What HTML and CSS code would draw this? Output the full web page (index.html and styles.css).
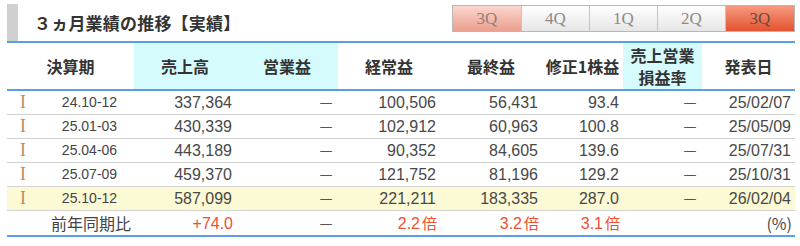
FILE: index.html
```html
<!DOCTYPE html>
<html lang="ja">
<head>
<meta charset="utf-8">
<link rel="stylesheet" href="styles.css">
</head>
<body>
<div class="wrap">
  <div class="titlebar">
    <div class="bar"></div>
    <h2 class="title">３ヵ月業績の推移【実績】</h2>
    <div class="tabs">
      <span class="tab tab-prev">3Q</span>
      <span class="tab">4Q</span>
      <span class="tab">1Q</span>
      <span class="tab">2Q</span>
      <span class="tab tab-cur">3Q</span>
    </div>
  </div>
  <table class="perf">
    <colgroup>
      <col class="c-i"><col class="c-per"><col class="c-num"><col class="c-num"><col class="c-num"><col class="c-num"><col class="c-eps"><col class="c-rate"><col class="c-date">
    </colgroup>
    <thead>
      <tr>
        <th colspan="2">決算期</th>
        <th class="hl">売上高</th>
        <th class="hl">営業益</th>
        <th>経常益</th>
        <th>最終益</th>
        <th>修正1株益</th>
        <th class="hl">売上営業<br>損益率</th>
        <th>発表日</th>
      </tr>
    </thead>
    <tbody>
      <tr>
        <td class="ic">I</td><td class="per">24.10-12</td>
        <td>337,364</td><td class="dash">－</td><td>100,506</td><td>56,431</td><td>93.4</td><td class="dash">－</td><td>25/02/07</td>
      </tr>
      <tr>
        <td class="ic">I</td><td class="per">25.01-03</td>
        <td>430,339</td><td class="dash">－</td><td>102,912</td><td>60,963</td><td>100.8</td><td class="dash">－</td><td>25/05/09</td>
      </tr>
      <tr>
        <td class="ic">I</td><td class="per">25.04-06</td>
        <td>443,189</td><td class="dash">－</td><td>90,352</td><td>84,605</td><td>139.6</td><td class="dash">－</td><td>25/07/31</td>
      </tr>
      <tr>
        <td class="ic">I</td><td class="per">25.07-09</td>
        <td>459,370</td><td class="dash">－</td><td>121,752</td><td>81,196</td><td>129.2</td><td class="dash">－</td><td>25/10/31</td>
      </tr>
      <tr class="latest">
        <td class="ic">I</td><td class="per">25.10-12</td>
        <td>587,099</td><td class="dash">－</td><td>221,211</td><td>183,335</td><td>287.0</td><td class="dash">－</td><td>26/02/04</td>
      </tr>
      <tr class="yoy">
        <td colspan="2" class="yoy-label">前年同期比</td>
        <td class="red">+74.0</td><td class="dash">－</td><td class="red">2.2<span class="bai">倍</span></td><td class="red">3.2<span class="bai">倍</span></td><td class="red">3.1<span class="bai">倍</span></td><td></td><td class="unit">(%)</td>
      </tr>
    </tbody>
  </table>
</div>
</body>
</html>
```

FILE: styles.css
```css
html, body {
  margin: 0;
  padding: 0;
  background: #fff;
}
body {
  font-family: "Liberation Sans", "Noto Sans CJK JP", sans-serif;
  color: #444;
}
.wrap {
  padding: 4px 5px 0 7px;
}
.titlebar {
  display: flex;
  align-items: flex-start;
  height: 37px;
  border-bottom: 2px solid #5a9de8;
}
.bar {
  width: 11px;
  height: 37px;
  background: #d0d0d0;
}
.title {
  margin: 0 0 0 16px;
  font-family: "Noto Sans CJK JP", sans-serif;
  font-size: 17px;
  font-weight: bold;
  color: #333;
  line-height: 37px;
  letter-spacing: 0.2px;
}
.tabs {
  margin-left: auto;
  margin-top: 1px;
  display: flex;
  border: 1px solid #b8b8b8;
}
.tab {
  width: 68px;
  height: 25px;
  box-sizing: border-box;
  border-left: 1px solid #c4c4c4;
  background: linear-gradient(#ffffff, #e6e6e6);
  font-family: "Liberation Serif", serif;
  font-size: 17px;
  line-height: 25px;
  text-align: center;
  color: #8a8a8a;
}
.tab:first-child {
  border-left: none;
}
.tab-prev {
  background: linear-gradient(#fbd6cc, #eba08f);
  color: #9a7a74;
}
.tab-cur {
  width: 69px;
  background: linear-gradient(#f69a80, #e4532f);
  color: #6a4a40;
}
.perf {
  width: 788px;
  border-collapse: collapse;
  table-layout: fixed;
}
.c-i { width: 38px; }
.c-per { width: 89px; }
.c-num { width: 102px; }
.c-eps { width: 81px; }
.c-rate { width: 79px; }
.c-date { width: 93px; }
.perf th {
  height: 46px;
  padding: 0;
  font-family: "Noto Sans CJK JP", sans-serif;
  font-size: 16px;
  font-weight: bold;
  color: #333;
  line-height: 22px;
  text-align: center;
  vertical-align: middle;
  border-bottom: 2px solid #5a9de8;
}
.perf th.hl {
  background: #d5fbfd;
}
.perf td {
  height: 23px;
  padding: 0 4px 0 0;
  font-size: 16px;
  line-height: 23px;
  text-align: right;
  color: #484848;
  border-bottom: 1px solid #d2d2d2;
  white-space: nowrap;
}
.perf td.ic {
  text-align: left;
  padding-left: 13px;
  font-family: "Liberation Serif", serif;
  font-size: 18px;
  color: #c0875e;
}
.perf td.per {
  text-align: center;
  padding: 0 0 0 0;
  font-size: 14px;
  color: #444;
}
.perf td.dash {
  font-family: "Noto Sans CJK JP", sans-serif;
  color: #555;
  padding-right: 4px;
}
.latest td {
  background: #fcfad4;
}
.yoy td {
  border-bottom: 2px solid #5a9de8;
  height: 23px;
}
.perf td.yoy-label {
  font-family: "Noto Sans CJK JP", sans-serif;
  padding-right: 3px;
  color: #444;
}
.perf td.red {
  color: #f04e2e;
  padding-right: 3px;
}
.bai {
  font-family: "Noto Sans CJK JP", sans-serif;
  font-size: 15px;
  margin-left: 2px;
}
.perf td.unit {
  font-family: "Noto Sans CJK JP", sans-serif;
  padding-right: 3px;
}
```
